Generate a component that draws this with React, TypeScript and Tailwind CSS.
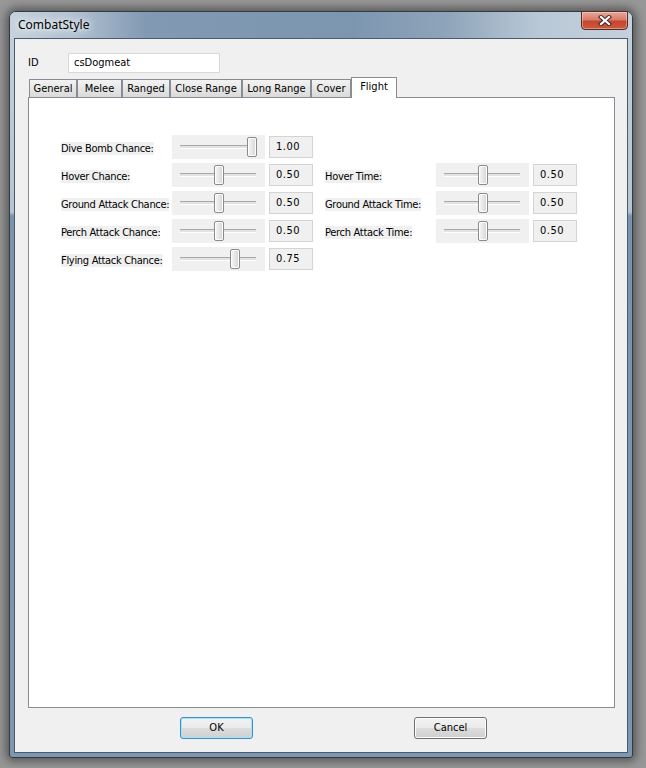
import React from "react";

const tabs = [
  { name: "General", w: "w-[48px]" },
  { name: "Melee", w: "w-[45px]" },
  { name: "Ranged", w: "w-[48px]" },
  { name: "Close Range", w: "w-[72px]" },
  { name: "Long Range", w: "w-[69px]" },
  { name: "Cover", w: "w-[40px]" },
];

type Field = { label: string; value: number } | null;

const rows: { left: Field; right: Field }[] = [
  { left: { label: "Dive Bomb Chance:", value: 1 }, right: null },
  { left: { label: "Hover Chance:", value: 0.5 }, right: { label: "Hover Time:", value: 0.5 } },
  { left: { label: "Ground Attack Chance:", value: 0.5 }, right: { label: "Ground Attack Time:", value: 0.5 } },
  { left: { label: "Perch Attack Chance:", value: 0.5 }, right: { label: "Perch Attack Time:", value: 0.5 } },
  { left: { label: "Flying Attack Chance:", value: 0.75 }, right: null },
];

function Slider({ value }: { value: number }) {
  return (
    <div className="relative h-[24px] w-[93px] bg-[#f0f0f0]">
      <div className="absolute left-[8px] top-[10px] h-[3px] w-[76px] border-t border-[#a8a8a8] bg-[#e2e2e2] shadow-[0_1px_0_#ffffff]" />
      <div
        className="absolute top-[2px] h-[20px] w-[10px] rounded-[2px] border border-[#8b8b8b] bg-[linear-gradient(to_right,#f7f7f7,#e6e6e6_50%,#d6d6d6)] shadow-[inset_0_0_0_1px_#ffffff]"
        style={{ left: Math.round(8.5 + 66 * value) }}
      />
    </div>
  );
}

function Cell({ field }: { field: Field }) {
  if (!field) return <div className="w-[252px]" />;
  return (
    <div className="flex h-[24px] w-[252px] items-start">
      <div className="w-[111px] pt-[6px]">
        <span className="whitespace-nowrap bg-[#f0f0f0] leading-[15px] tracking-[-0.3px]">{field.label}</span>
      </div>
      <Slider value={field.value} />
      <div className="ml-[4px] mt-[1px] h-[22px] w-[44px] border border-[#d4d4d4] bg-[#f0f0f0] pl-[6px] pt-[1px] leading-[18px] tracking-[0.5px]">
        {field.value.toFixed(2)}
      </div>
    </div>
  );
}

export default function App() {
  return (
    <div className="h-[768px] w-[646px] overflow-hidden bg-[#979797] pl-[9px] pt-[11px] font-['DejaVu_Sans_Condensed','Liberation_Sans',Arial,sans-serif] text-[11px] text-black">
      <div className="flex h-[747px] w-[624px] flex-col rounded-t-[7px] rounded-b-[3px] border border-[#333a42] bg-[linear-gradient(to_bottom,#c4d1dd_0px,#b4c4d4_200px,#7a93ae_204px,#7d96b1_100%)] shadow-[0_0_10px_3px_rgba(0,0,0,0.45)]">
        <div className="flex h-[26px] items-start justify-between rounded-t-[6px] bg-[linear-gradient(to_right,#c6d3de_0%,#b2c2d1_10%,#8199b3_22%,#7d96b0_55%,#8ea4ba_70%,#b9c8d6_85%,#c4d1dc_100%)]">
          <div className="pl-[8px] pt-[5px] font-['Noto_Sans',sans-serif] text-[12px] leading-[16px] [text-shadow:0_0_6px_#ffffff,0_0_10px_#ffffff]">
            CombatStyle
          </div>
          <div className="mr-[4px] mt-[-1px] flex h-[19px] w-[47px] items-center justify-center rounded-b-[4px] border border-[#5a2a22] bg-[linear-gradient(to_bottom,#e6a797_0%,#d87d6a_45%,#c8452e_55%,#c95a3e_100%)] shadow-[inset_0_0_0_1px_rgba(255,255,255,0.35)]">
            <svg width="14" height="11" viewBox="0 0 14 11">
              <path d="M3 2 L11 9 M11 2 L3 9" stroke="#3b2a2a" strokeWidth="4.2" strokeLinecap="square" />
              <path d="M3 2 L11 9 M11 2 L3 9" stroke="#ffffff" strokeWidth="2.2" strokeLinecap="square" />
            </svg>
          </div>
        </div>

        <div className="mx-[4px] mb-[4px] flex-1 border border-[#4c5a6a] bg-[#f0f0f0]">
          <div className="ml-[13px] mt-[14px] flex h-[20px] items-center">
            <div className="w-[40px]">ID</div>
            <div className="flex h-[20px] w-[152px] items-center border border-[#d9d9d9] bg-white pl-[5px]">csDogmeat</div>
          </div>

          <div className="ml-[13px] mt-[4px] flex h-[20px] items-end pl-[1px]">
            {tabs.map((t) => (
              <div
                key={t.name}
                className={`${t.w} flex h-[18px] items-center justify-center border border-b-0 border-[#898c95] bg-[linear-gradient(to_bottom,#f3f3f3,#e6e6e6_50%,#dadada)] leading-[14px]`}
              >
                {t.name}
              </div>
            ))}
            <div className="relative z-10 mb-[-1px] flex h-[21px] w-[46px] items-start justify-center border border-b-0 border-[#898c95] bg-white pt-[2px] leading-[14px]">
              Flight
            </div>
          </div>

          <div className="ml-[13px] h-[611px] w-[587px] border border-[#898c95] bg-white pl-[32px] pt-[37px]">
            <div className="flex flex-col gap-[4px]">
              {rows.map((r, i) => (
                <div key={i} className="flex gap-[12px]">
                  <Cell field={r.left} />
                  <Cell field={r.right} />
                </div>
              ))}
            </div>
          </div>

          <div className="mt-[9px] flex">
            <button className="ml-[165px] h-[22px] w-[73px] rounded-[3px] border border-[#3c8fc8] bg-[linear-gradient(to_bottom,#f2f2f2_0%,#ebebeb_50%,#dddddd_51%,#cfcfcf_100%)] leading-[18px] shadow-[inset_0_0_0_1px_#a6e3fb]">
              OK
            </button>
            <button className="ml-[161px] h-[22px] w-[73px] rounded-[3px] border border-[#707070] bg-[linear-gradient(to_bottom,#f2f2f2_0%,#ebebeb_50%,#dddddd_51%,#cfcfcf_100%)] leading-[18px] shadow-[inset_0_0_0_1px_#fcfcfc]">
              Cancel
            </button>
          </div>
        </div>
      </div>
    </div>
  );
}
